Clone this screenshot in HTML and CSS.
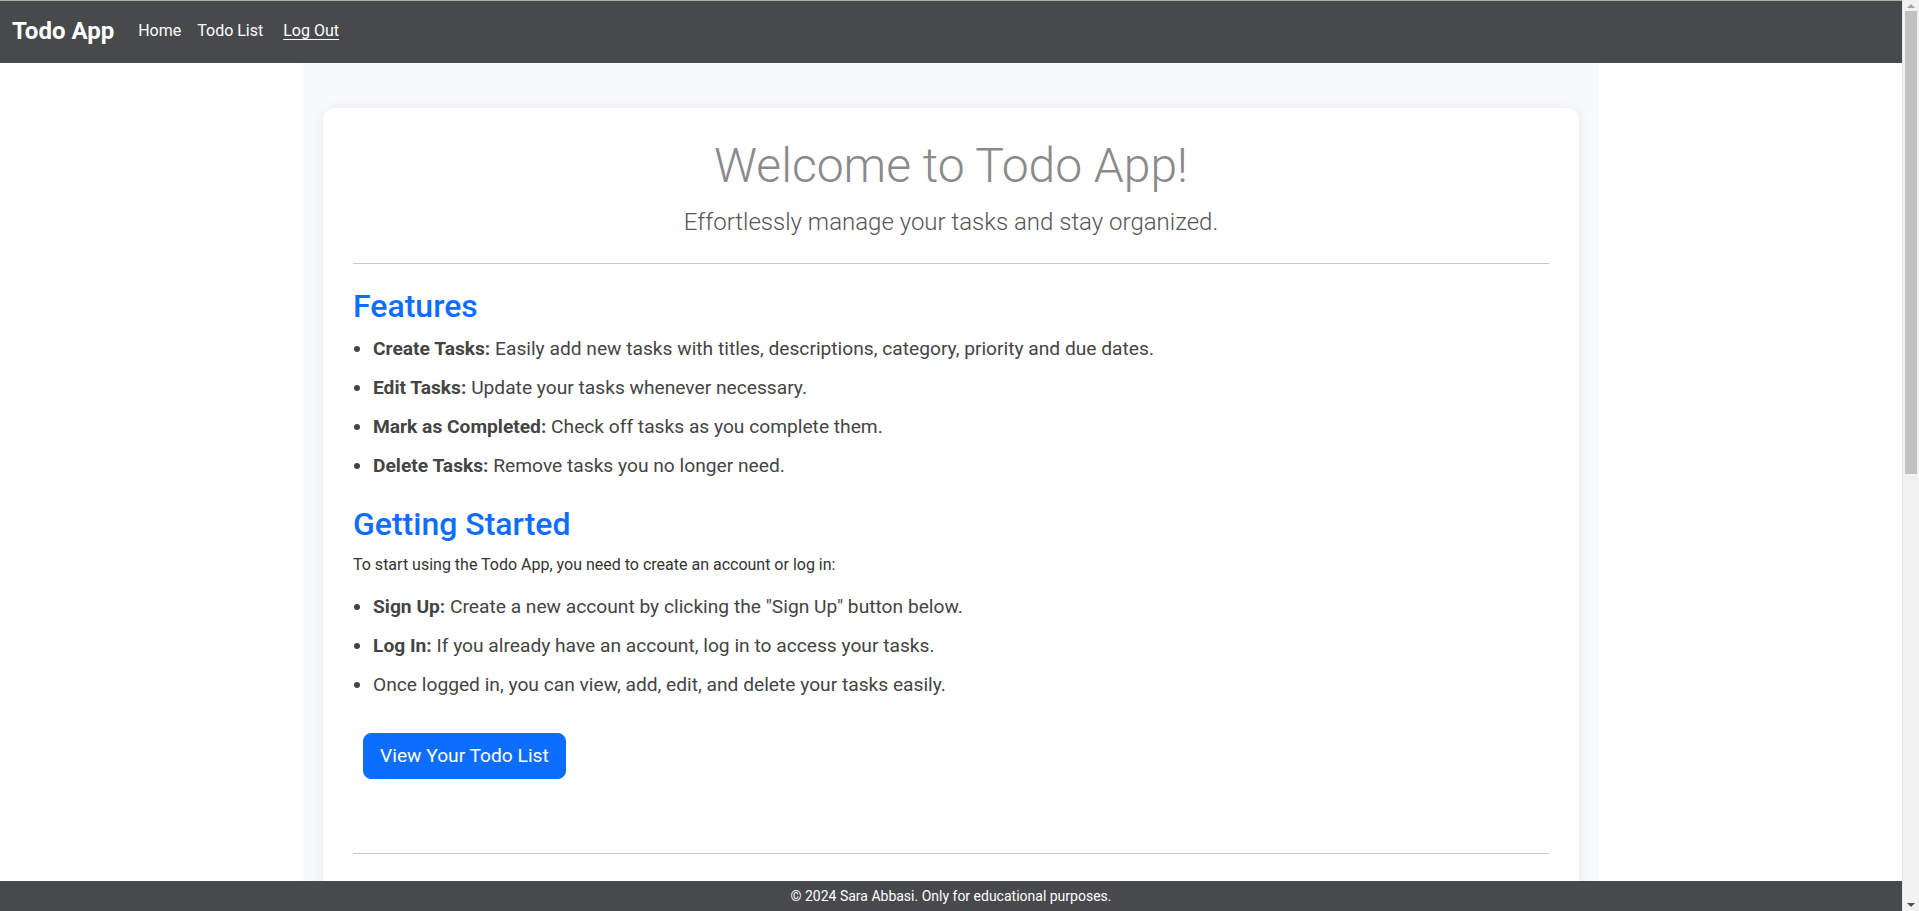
FILE: index.html
```html
<!DOCTYPE html>
<html lang="en">
<head>
<meta charset="utf-8">
<title>Todo App</title>
<link rel="stylesheet" href="styles.css">
</head>
<body>
<header class="navbar">
  <a class="brand" href="#">Todo App</a>
  <nav class="nav">
    <a class="nav-link" href="#">Home</a>
    <a class="nav-link" href="#">Todo List</a>
    <a class="nav-link logout" href="#">Log Out</a>
  </nav>
</header>

<main class="container">
  <div class="backdrop">
    <section class="card">
      <div class="hero">
        <h1 class="title">Welcome to Todo App!</h1>
        <p class="lead">Effortlessly manage your tasks and stay organized.</p>
      </div>
      <hr class="rule">

      <h2 class="section-title">Features</h2>
      <ul class="list">
        <li><strong>Create Tasks:</strong> Easily add new tasks with titles, descriptions, category, priority and due dates.</li>
        <li><strong>Edit Tasks:</strong> Update your tasks whenever necessary.</li>
        <li><strong>Mark as Completed:</strong> Check off tasks as you complete them.</li>
        <li><strong>Delete Tasks:</strong> Remove tasks you no longer need.</li>
      </ul>

      <h2 class="section-title second">Getting Started</h2>
      <p class="intro">To start using the Todo App, you need to create an account or log in:</p>
      <ul class="list">
        <li><strong>Sign Up:</strong> Create a new account by clicking the "Sign Up" button below.</li>
        <li><strong>Log In:</strong> If you already have an account, log in to access your tasks.</li>
        <li>Once logged in, you can view, add, edit, and delete your tasks easily.</li>
      </ul>

      <div class="actions">
        <a class="btn" href="#">View Your Todo List</a>
      </div>

      <hr class="rule bottom">
      <div class="below"></div>
    </section>
  </div>
</main>

<footer class="footer">© 2024 Sara Abbasi. Only for educational purposes.</footer>

<div class="scrollbar" aria-hidden="true">
  <span class="arrow up"></span>
  <span class="thumb"></span>
  <span class="arrow down"></span>
</div>
</body>
</html>
```

FILE: styles.css
```css
* { box-sizing: border-box; }

html, body {
  margin: 0;
  padding: 0;
}

body {
  margin-right: 17px;
  font-family: Roboto, "Liberation Sans", Arial, sans-serif;
  font-size: 16px;
  line-height: 1.5;
  color: #212529;
  background: #ffffff;
}

a { text-decoration: none; }

/* Header */
.navbar {
  display: flex;
  align-items: center;
  background: #48494b;
  border-top: 1px solid #a3b59f;
  padding: 7px 12px 9px 12px;
}

.brand {
  color: #ffffff;
  font-size: 24px;
  font-weight: 700;
  line-height: 36px;
  padding: 5px 0;
  margin-right: 16px;
}

.nav {
  display: flex;
  align-items: center;
}

.nav-link {
  color: #ffffff;
  font-size: 16px;
  line-height: 24px;
  padding: 8px;
}

.logout {
  margin-left: 4px;
  text-decoration: underline;
  text-underline-offset: 3px;
}

/* Main */
.container {
  max-width: 1320px;
  margin: 0 auto;
  padding: 0 12px;
}

.backdrop {
  background: #f8f9fa;
  padding: 45px 20px 60px 20px;
  min-height: 1663px;
}

.card {
  background: #ffffff;
  border-radius: 12px;
  box-shadow: 0 2px 14px rgba(0, 0, 0, 0.07);
  padding: 28px 30px 30px 30px;
}

.hero {
  text-align: center;
}

.title {
  margin: 0 0 8px 0;
  font-size: 48px;
  font-weight: 300;
  line-height: 60px;
  color: #8a8a8a;
}

.lead {
  margin: 0;
  font-size: 24px;
  font-weight: 300;
  line-height: 36px;
  color: #555555;
}

.rule {
  border: 0;
  border-top: 1px solid #c9c9c9;
  margin: 23px 0 23px 0;
}

.rule.bottom {
  margin: 74px 0 0 0;
}

.section-title {
  margin: 0 0 10px 0;
  font-size: 32px;
  font-weight: 500;
  line-height: 38px;
  color: #0d6efd;
}

.section-title.second {
  margin-top: 26px;
  margin-bottom: 11px;
}

.list {
  margin: 0;
  padding-left: 20px;
  color: #444444;
  font-size: 19.2px;
}

.list li {
  line-height: 27px;
  margin-bottom: 12px;
}

.list strong {
  font-weight: 700;
}

.intro {
  margin: 0 0 17px 0;
  font-size: 16px;
  line-height: 22px;
  color: #333333;
}

.actions {
  margin-top: 34.5px;
  padding-left: 10px;
}

.btn {
  display: inline-block;
  background: #0d6efd;
  color: #ffffff;
  font-size: 19.2px;
  line-height: 28.8px;
  padding: 8px 16px;
  border: 1px solid #0d6efd;
  border-radius: 8px;
}

.below {
  height: 720px;
}

/* Footer */
.footer {
  position: fixed;
  left: 0;
  right: 17px;
  bottom: 0;
  height: 30px;
  background: #48494b;
  color: #ffffff;
  font-size: 14px;
  line-height: 30px;
  text-align: center;
}

/* Emulated classic scrollbar (reference shows one) */
.scrollbar {
  position: fixed;
  top: 0;
  right: 0;
  bottom: 0;
  width: 17px;
  background: #f1f1f1;
  border-left: 1px solid #e8e8e8;
}

.thumb {
  position: absolute;
  left: 2px;
  right: 2px;
  top: 11px;
  height: 463px;
  background: #c1c1c1;
}

.arrow {
  position: absolute;
  left: 4px;
  width: 0;
  height: 0;
  border-left: 4px solid transparent;
  border-right: 4px solid transparent;
}

.arrow.up {
  top: 4px;
  border-bottom: 4px solid #a3a3a3;
}

.arrow.down {
  bottom: 4px;
  border-top: 4px solid #505050;
}
```
